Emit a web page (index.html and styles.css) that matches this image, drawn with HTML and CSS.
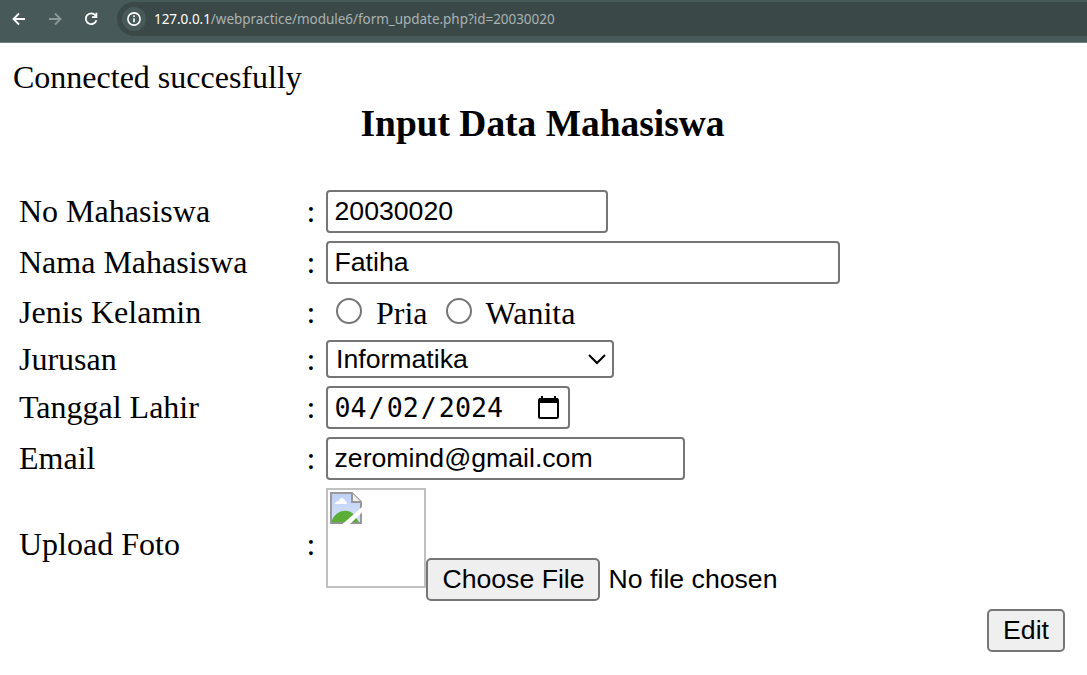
FILE: index.html
```html
<!DOCTYPE html>
<html lang="id">
<head>
<meta charset="utf-8">
<title>Input Data Mahasiswa</title>
<link rel="stylesheet" href="styles.css">
</head>
<body>
<header class="toolbar">
  <svg class="nav-icon" viewBox="0 0 20 20"><path d="M16 10H5M10 4.500L4.500 10l5.500 5.500"/></svg>
  <svg class="nav-icon nav-muted" viewBox="0 0 20 20"><path d="M4 10h11M10 4.500l5.500 5.500-5.500 5.500"/></svg>
  <svg class="nav-icon" viewBox="0 0 20 20"><path d="M14.300 6.200A5.400 5.400 0 1 0 15.400 11.200"/><path d="M15.400 3.800v4.400H11"/><path class="solid" d="M12.500 7.500l3-3v3z"/></svg>
  <div class="address">
    <span class="site-info"><svg class="info-icon" viewBox="0 0 16 16"><circle cx="8" cy="8" r="6.100"/><path d="M8 7.300v4M8 4.300v1.700"/></svg></span>
    <span class="url"><span class="host">127.0.0.1</span>/webpractice/module6/form_update.php?id=20030020</span>
  </div>
</header>
<main class="page">
  <p class="status">Connected succesfully</p>
  <h3 class="title">Input Data Mahasiswa</h3>
  <form class="form">
    <div class="row"><span class="label">No Mahasiswa</span><span class="colon">:</span><input class="field number" type="text" value="20030020"></div>
    <div class="row"><span class="label">Nama Mahasiswa</span><span class="colon">:</span><input class="field name" type="text" value="Fatiha"></div>
    <div class="row row-gender"><span class="label">Jenis Kelamin</span><span class="colon">:</span>
      <div class="choices"><label class="choice"><input class="radio" type="radio" name="jk">Pria</label><label class="choice"><input class="radio" type="radio" name="jk">Wanita</label></div>
    </div>
    <div class="row row-select"><span class="label">Jurusan</span><span class="colon">:</span>
      <div class="select"><span>Informatika</span><svg class="chevron" viewBox="0 0 18 12"><path d="M1 2l8 8 8-8"/></svg></div>
    </div>
    <div class="row"><span class="label">Tanggal Lahir</span><span class="colon">:</span>
      <div class="field date"><span class="date-parts"><span>04</span><span>/</span><span>02</span><span>/</span><span>2024</span></span>
        <svg class="calendar" viewBox="0 0 21 24"><path d="M4 0v3M17 0v3" stroke="#000" stroke-width="2"/><rect x="1" y="3" width="19" height="19" rx="1.500" fill="none" stroke="#000" stroke-width="2"/><path d="M1 2h19v5H1z"/></svg></div>
    </div>
    <div class="row"><span class="label">Email</span><span class="colon">:</span><input class="field email" type="text" value="zeromind@gmail.com"></div>
    <div class="row row-upload"><span class="label">Upload Foto</span><span class="colon">:</span>
      <div class="upload">
        <div class="photo">
          <svg class="broken" viewBox="0 0 32 32">
            <defs><linearGradient id="sky" x2="0" y2="1"><stop offset="0" stop-color="#bfd2f6"/><stop offset="1" stop-color="#d5e1f8"/></linearGradient></defs>
            <path d="M1 1h21l9 9v21H1z" fill="#fff" stroke="#999" stroke-width="2"/>
            <path d="M2 2h19v9h9v19H2z" fill="url(#sky)"/>
            <path d="M5 12c0-2 2-3 4-3 1-4 5-4 6 0 1 0 2 1 2 3z" fill="#fff"/>
            <path d="M2 30v-2C7 17 20 16 25 24l4 6z" fill="#5aad36"/>
            <path d="M1 31h30" stroke="#929292" stroke-width="2"/>
            <path d="M22 1v9h9" fill="#eee" stroke="#999" stroke-width="2"/>
            <path d="M12.500 32L32 15v5.500L20 32z" fill="#fff"/>
          </svg>
        </div>
        <button class="button choose" type="button">Choose File</button>
        <span class="file-name">No file chosen</span>
      </div>
    </div>
    <div class="actions"><button class="button edit" type="button">Edit</button></div>
  </form>
</main>
</body>
</html>
```
FILE: styles.css
```css
* { box-sizing: border-box; }
body { margin: 0; background: #fff; color: #000; font: 32px/36px "Liberation Serif", serif; }
.toolbar { display: flex; align-items: center; height: 43px; padding: 0 0 5px 9px; background: #475a59; border-bottom: 1px solid #6f8180; }
.nav-icon { width: 20px; height: 20px; margin-right: 16px; flex: none; fill: none; stroke: #fff; stroke-width: 1.8; }
.nav-muted { stroke: #8b9897; }
.solid { fill: #fff; stroke: none; }
.address { display: flex; align-items: center; flex: 1; height: 34px; padding-left: 5px; border-radius: 17px 0 0 17px; background: #3b4848; }
.nav-icon + .address { margin-top: 1px; }
.site-info { display: grid; place-items: center; width: 24px; height: 24px; border-radius: 50%; background: #475a59; }
.info-icon { width: 16px; height: 16px; fill: none; stroke: #fff; stroke-width: 1.6; }
.url { margin-left: 8px; font: 13.5px/20px "Noto Sans", sans-serif; letter-spacing: -0.04px; color: #a9b3b2; white-space: nowrap; }
.host { color: #fff; }
.page { padding: 16px 16px 0 13px; }
.status { margin: 0; }
.title { margin: 7px 0 45px; padding-left: 1px; text-align: center; font-size: 37.440px; line-height: 43px; }
.form { display: flex; flex-direction: column; gap: 8px; padding-left: 6px; }
.row { display: grid; grid-template-columns: 287.500px 19.500px 1fr; align-items: center; height: 43px; }
.label, .colon { padding-bottom: 2px; }
.row-gender { height: 40px; }
.row-select { height: 38px; }
.row-gender .label, .row-gender .colon, .row-select .label, .row-select .colon { padding-bottom: 0; }
.row-upload { height: 113px; }
.field { height: 43px; margin: 0; padding: 2px 6px 2px 6.500px; border: 2px solid #767676; border-radius: 4px; background: #fff; color: #000; font: 26.667px "Liberation Sans", sans-serif; }
.number { width: 282px; }
.name { width: 514px; }
.email { width: 359px; }
.choices { display: flex; gap: 18px; }
.choice { display: flex; align-items: center; padding-left: 10px; padding-top: 2px; }
.choice + .choice { padding-left: 0; }
.radio { appearance: none; width: 26px; height: 26px; margin: -4px 14px 0 0; border: 2px solid #767676; border-radius: 50%; }
.select { display: flex; align-items: center; justify-content: space-between; width: 288px; height: 38px; padding: 0 6px 0 8px; border: 2px solid #767676; border-radius: 4px; font: 26.667px "Liberation Sans", sans-serif; }
.chevron { width: 18px; height: 12px; fill: none; stroke: #000; stroke-width: 2; }
.date { display: flex; align-items: center; justify-content: space-between; width: 244px; padding-right: 9px; font-family: "DejaVu Sans Mono", monospace; }
.date-parts { display: flex; gap: 2px; }
.calendar { width: 21px; height: 24px; }
.upload { display: flex; align-items: flex-end; height: 113px; font: 26.667px/30px "Liberation Sans", sans-serif; }
.photo { width: 100px; height: 100px; margin-bottom: 13px; padding: 2px; border: 2px solid silver; }
.broken { display: block; width: 32px; height: 32px; }
.button { height: 43px; margin: 0; padding: 0; border: 2px solid #767676; border-radius: 5px; background: #efefef; color: #000; font: 26.667px "Liberation Sans", sans-serif; }
.choose { width: 174px; padding-left: 1px; }
.edit { width: 78px; }
.file-name { margin: 0 0 7px 8.600px; }
.actions { display: flex; justify-content: flex-end; padding-right: 6px; }
```
